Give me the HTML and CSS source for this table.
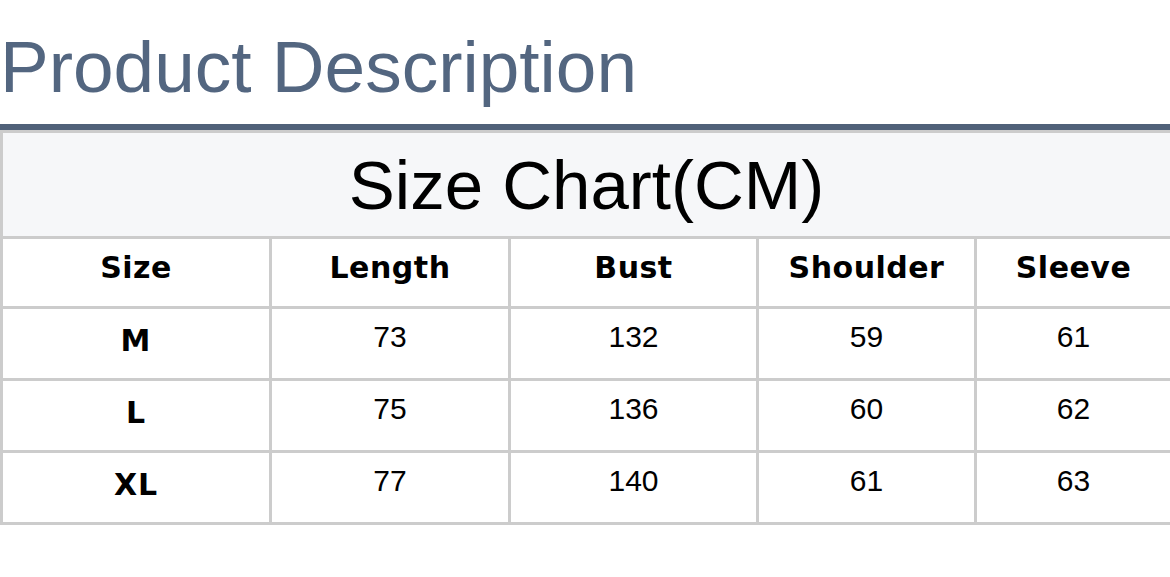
FILE: index.html
```html
<!DOCTYPE html>
<html>
<head>
<meta charset="utf-8">
<link rel="stylesheet" href="styles.css">
</head>
<body>
<div class="page">
  <h1 class="title">Product Description</h1>
  <table class="chart">
    <colgroup>
      <col class="c1"><col class="c2"><col class="c3"><col class="c4"><col class="c5">
    </colgroup>
    <tr><th colspan="5" class="caption">Size Chart(CM)</th></tr>
    <tr class="head"><th>Size</th><th>Length</th><th>Bust</th><th>Shoulder</th><th>Sleeve</th></tr>
    <tr class="row"><th>M</th><td>73</td><td>132</td><td>59</td><td>61</td></tr>
    <tr class="row"><th>L</th><td>75</td><td>136</td><td>60</td><td>62</td></tr>
    <tr class="row"><th>XL</th><td>77</td><td>140</td><td>61</td><td>63</td></tr>
  </table>
</div>
</body>
</html>
```
FILE: styles.css
```css
html, body {
  margin: 0;
  padding: 0;
  background: #ffffff;
}
.page {
  width: 1170px;
}
.title {
  margin: 0;
  padding: 27px 0 17px 0;
  font-family: "Liberation Sans", Arial, sans-serif;
  font-weight: normal;
  font-size: 73px;
  line-height: 80px;
  color: #536680;
  border-bottom: 6px solid #506179;
}
.chart {
  width: 1170px;
  border-collapse: collapse;
  table-layout: fixed;
}
.c1 { width: 269px; }
.c2 { width: 239px; }
.c3 { width: 248px; }
.c4 { width: 218px; }
.c5 { width: 196px; }
.chart th, .chart td {
  border: 3px solid #cccccc;
  text-align: center;
  padding: 0;
  color: #000;
}
.caption {
  background: #f6f7f9;
  font-family: "Liberation Sans", Arial, sans-serif;
  font-weight: normal;
  font-size: 69px;
  line-height: 80px;
  height: 105px;
  padding: 13px 0 10px 0 !important;
  box-sizing: border-box;
}
.chart .head th {
  font-family: "DejaVu Sans", Verdana, sans-serif;
  font-weight: bold;
  font-size: 30px;
  letter-spacing: 0.5px;
  line-height: 34px;
  padding: 12px 0 21px 0;
  vertical-align: top;
}
.chart .row th {
  font-family: "DejaVu Sans", Verdana, sans-serif;
  font-weight: bold;
  font-size: 30px;
  letter-spacing: 1px;
  line-height: 34px;
  padding: 15px 0 20px 0;
  vertical-align: top;
}
.chart .row td {
  font-family: "Liberation Sans", Arial, sans-serif;
  font-size: 30px;
  line-height: 34px;
  padding: 11px 0 24px 0;
  vertical-align: top;
}
```
